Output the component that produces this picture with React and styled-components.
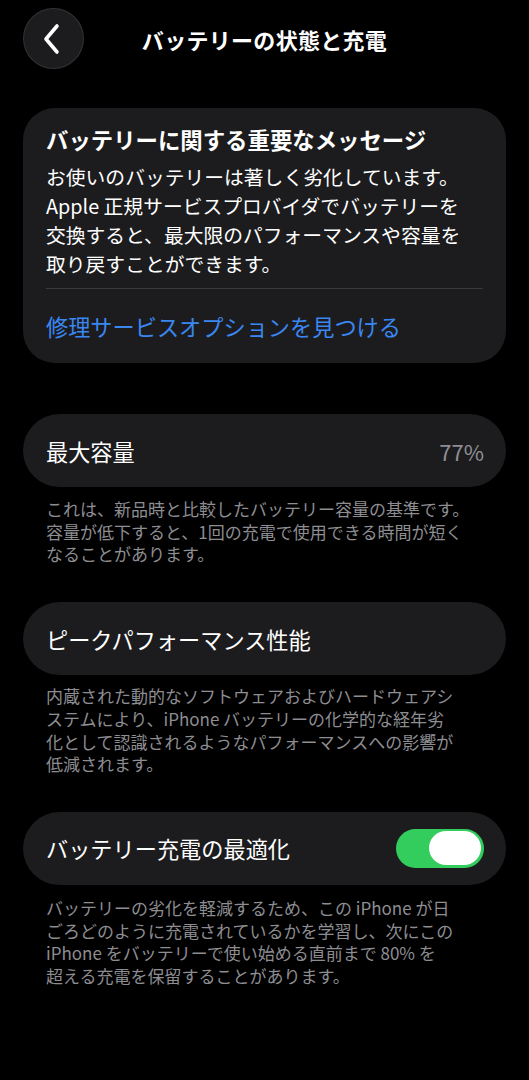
import React from 'react';
import styled, { createGlobalStyle } from 'styled-components';

const GlobalStyle = createGlobalStyle`
  html, body {
    margin: 0;
    padding: 0;
    background: #000;
  }
  body {
    font-family: "Noto Sans CJK JP", "Noto Sans", sans-serif;
    color: #fff;
    -webkit-font-smoothing: antialiased;
  }
`;

const Page = styled.div`
  width: 529px;
  min-height: 1080px;
  background: #000;
  display: flex;
  flex-direction: column;
`;

const Header = styled.header`
  display: grid;
  grid-template-columns: 1fr auto 1fr;
  align-items: center;
  height: 60px;
  padding: 8px 23px 0;
`;

const BackButton = styled.button`
  width: 61px;
  height: 61px;
  border-radius: 50%;
  background: #1c1c1e;
  border: 1px solid rgba(255, 255, 255, 0.1);
  display: flex;
  align-items: center;
  justify-content: center;
  padding: 0 4px 0 0;
  cursor: pointer;
`;

const HeaderTitle = styled.h1`
  margin: 0;
  font-size: 22px;
  font-weight: 700;
  letter-spacing: 0.3px;
  color: #fff;
`;

const Content = styled.main`
  display: flex;
  flex-direction: column;
  gap: 36px;
  padding: 40px 23px 0;
`;

const Card = styled.section`
  background: #1c1c1e;
  border-radius: 32px;
  padding: 16px 23px 22px;
  margin-bottom: 15px;
`;

const CardTitle = styled.h2`
  margin: 0;
  font-size: 22.4px;
  line-height: 30px;
  font-weight: 700;
  color: #fff;
`;

const CardBody = styled.p`
  margin: 8px 0 0;
  font-size: 19.8px;
  line-height: 29px;
  color: #fff;
  white-space: nowrap;
`;

const Divider = styled.hr`
  border: none;
  height: 1px;
  background: #3a3a3c;
  margin: 10px 0 22px;
`;

const LinkText = styled.a`
  display: block;
  font-size: 22.2px;
  line-height: 30px;
  color: #3a87f2;
  text-decoration: none;
`;

const Section = styled.div`
  display: flex;
  flex-direction: column;
`;

const Row = styled.div`
  height: 73px;
  border-radius: 37px;
  background: #1c1c1e;
  display: flex;
  align-items: center;
  justify-content: space-between;
  padding: 0 22px 0 23px;
`;

const RowLabel = styled.span`
  font-size: 22.2px;
  color: #fff;
`;

const RowValue = styled.span`
  font-size: 22px;
  color: #8e8e93;
`;

const Footnote = styled.p`
  margin: ${p => p.top || 11}px 0 0;
  padding: 0 0 0 23px;
  font-size: 17px;
  line-height: 22.7px;
  color: #8d8d92;
  white-space: nowrap;
`;

const Toggle = styled.div`
  width: 88px;
  height: 39px;
  border-radius: 20px;
  background: ${p => (p.on ? '#32cd5c' : '#39393d')};
  display: flex;
  align-items: center;
  justify-content: ${p => (p.on ? 'flex-end' : 'flex-start')};
  padding: 0 3px;
  box-sizing: border-box;
`;

const Knob = styled.div`
  width: 52px;
  height: 34px;
  border-radius: 17px;
  background: #fff;
`;

const Chevron = () => (
  <svg width="22" height="32" viewBox="0 0 22 32" fill="none">
    <polyline
      points="16,3 5,16 16,29"
      stroke="#fff"
      strokeWidth="3.6"
      strokeLinecap="round"
      strokeLinejoin="round"
    />
  </svg>
);

const App = () => (
  <Page>
    <GlobalStyle />
    <Header>
      <div>
        <BackButton aria-label="戻る">
          <Chevron />
        </BackButton>
      </div>
      <HeaderTitle>バッテリーの状態と充電</HeaderTitle>
      <div />
    </Header>

    <Content>
      <Card>
        <CardTitle>バッテリーに関する重要なメッセージ</CardTitle>
        <CardBody>
          お使いのバッテリーは著しく劣化しています。<br />
          Apple 正規サービスプロバイダでバッテリーを<br />
          交換すると、最大限のパフォーマンスや容量を<br />
          取り戻すことができます。
        </CardBody>
        <Divider />
        <LinkText>修理サービスオプションを見つける</LinkText>
      </Card>

      <Section>
        <Row>
          <RowLabel>最大容量</RowLabel>
          <RowValue>77%</RowValue>
        </Row>
        <Footnote>
          これは、新品時と比較したバッテリー容量の基準です。<br />
          容量が低下すると、1回の充電で使用できる時間が短く<br />
          なることがあります。
        </Footnote>
      </Section>

      <Section>
        <Row>
          <RowLabel>ピークパフォーマンス性能</RowLabel>
        </Row>
        <Footnote top={10}>
          内蔵された動的なソフトウェアおよびハードウェアシ<br />
          ステムにより、iPhone バッテリーの化学的な経年劣<br />
          化として認識されるようなパフォーマンスへの影響が<br />
          低減されます。
        </Footnote>
      </Section>

      <Section>
        <Row>
          <RowLabel>バッテリー充電の最適化</RowLabel>
          <Toggle on>
            <Knob />
          </Toggle>
        </Row>
        <Footnote top={12}>
          バッテリーの劣化を軽減するため、この iPhone が日<br />
          ごろどのように充電されているかを学習し、次にこの<br />
          iPhone をバッテリーで使い始める直前まで 80% を<br />
          超える充電を保留することがあります。
        </Footnote>
      </Section>
    </Content>
  </Page>
);

export default App;
